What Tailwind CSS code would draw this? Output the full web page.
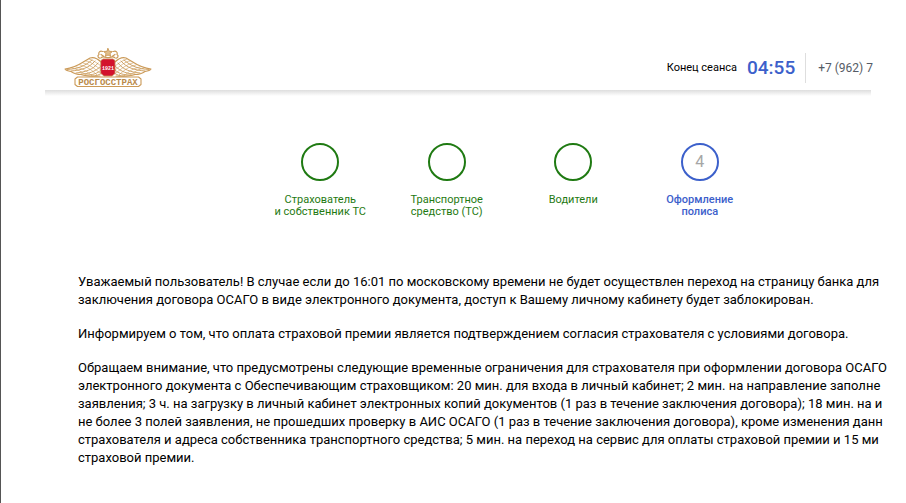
<!DOCTYPE html>
<html lang="ru">
<head>
  <meta charset="UTF-8" />
  <meta name="viewport" content="width=device-width, initial-scale=1.0" />
  <title>Росгосстрах | Оформление полиса</title>
  <script src="https://cdn.jsdelivr.net/npm/@tailwindcss/browser@4"></script>
</head>
<body class="min-h-screen overflow-x-hidden border-l border-[#555] bg-white pl-11 pr-[35px] font-[Roboto,sans-serif] text-black">

  <!-- Header -->
  <header class="flex h-[90px] items-end justify-between pl-[19px]">
    <a href="/" aria-label="Росгосстрах" class="mb-[2px]">
      <svg class="h-10 w-[88px]" viewBox="0 0 88 40" fill="none" stroke="#cb9a58" stroke-width="0.9" stroke-linecap="round" stroke-linejoin="round">
        <!-- one wing, mirrored for the other side -->
        <g id="wing">
          <path stroke-width="1.100" d="M37 14C33 10 29 9 26 10C20 13 13 20 1 21C2 22.500 4 23 7 23.500C9 25 13 26.500 17 26.500C21 28 29 28.500 36 28" />
          <path d="M3 21.500C14 21 21 18 28 12M7 23C18 22 25 20 31 13M12 25C21 24 29 22 34 15M17 26C24 26 31 24 37 18M22 27C28 27 33 26 37 22M28 28C32 28 35 27 38 25" />
          <path stroke-width="0.600" d="M22 13C26 13 32 18 37 22M19 15C25 16 31 21 36 25M16 17C22 18 28 22 33 27M12 19C18 20 23 23 28 28M8 20C13 21 18 24 22 27M25 11C29 12 33 15 37 18" />
        </g>
        <use href="#wing" transform="matrix(-1 0 0 1 88 0)" />
        <!-- wreath and star on top -->
        <path fill="#e0bd8b" d="M44 0.500l1.300 2.800 3.200.2-2.500 2 .8 3L44 7 41.200 8.500l.8-3-2.500-2 3.200-.2z" />
        <path stroke-width="1.200" d="M38.500 3.500c-2.500-1-4.500 1-3.500 3-2 1-1 4 1.500 3.500M49.500 3.500c2.500-1 4.500 1 3.500 3 2 1 1 4-1.500 3.500M37.500 9.500c2-2 4 1 6.500 0 2.500 1 4.500-2 6.500 0M37 6.500l3 2M51 6.500l-3 2" />
        <path fill="#d3122d" stroke="#c98555" d="M37 12.500l2-1.500h10l2 1.500v13l-3 2.500h-8l-3-2.500z" />
        <text x="44" y="22" text-anchor="middle" fill="#fff" stroke="none" font-family="Liberation Mono, monospace" font-size="5" font-weight="700">1921</text>
        <path fill="#fff" stroke-width="1.100" d="M13.500 29h61l2.500 2v5.500l-2.500 2h-61l-2.500-2v-5.500z" />
        <text x="44" y="36.500" text-anchor="middle" fill="#b98a4a" stroke="none" font-family="Liberation Mono, monospace" font-size="9" font-weight="700">РОСГОССТРАХ</text>
      </svg>
    </a>
    <div class="-mr-0.5 mb-[7px] flex h-[30px] items-center">
      <span class="text-[11px]">Конец сеанса</span>
      <time class="ml-2.5 text-[19px] font-medium text-[#3c60cb]">04:55</time>
      <span class="ml-2.5 h-full w-px bg-[#dedede]"></span>
      <a href="tel:+79627" class="ml-3 text-xs text-[#555b65]">+7 (962) 7</a>
    </div>
  </header>
  <div class="h-[6px] bg-linear-to-b from-[#dedede] to-white"></div>

  <!-- Steps -->
  <ol class="ml-[212px] mt-[47px] grid w-[506px] grid-cols-4 text-center text-[11px] leading-3 text-[#1f7a12]">
    <li class="flex flex-col items-center gap-[13px]">
      <span class="size-[38px] rounded-full border-2 border-current"></span>
      <span>Страхователь<br />и собственник ТС</span>
    </li>
    <li class="flex flex-col items-center gap-[13px]">
      <span class="size-[38px] rounded-full border-2 border-current"></span>
      <span>Транспортное<br />средство (ТС)</span>
    </li>
    <li class="flex flex-col items-center gap-[13px]">
      <span class="size-[38px] rounded-full border-2 border-current"></span>
      <span>Водители</span>
    </li>
    <li class="flex flex-col items-center gap-[13px] font-medium text-[#3c60cb]" aria-current="step">
      <span class="flex size-[38px] items-center justify-center rounded-full border-2 border-current">
        <span class="text-base font-normal text-[#a6a6a6]">4</span>
      </span>
      <span>Оформление<br />полиса</span>
    </li>
  </ol>

  <!-- Notice -->
  <main class="mt-[55px] space-y-4 whitespace-nowrap pl-[33px] text-[13px] leading-[18px]">
    <p>
      Уважаемый пользователь! В случае если до 16:01 по московскому времени не будет осуществлен переход на страницу банка для<br />
      заключения договора ОСАГО в виде электронного документа, доступ к Вашему личному кабинету будет заблокирован.
    </p>
    <p>Информируем о том, что оплата страховой премии является подтверждением согласия страхователя с условиями договора.</p>
    <p>
      Обращаем внимание, что предусмотрены следующие временные ограничения для страхователя при оформлении договора ОСАГО<br />
      электронного документа с Обеспечивающим страховщиком: 20 мин. для входа в личный кабинет; 2 мин. на направление заполне<br />
      заявления; 3 ч. на загрузку в личный кабинет электронных копий документов (1 раз в течение заключения договора); 18 мин. на и<br />
      не более 3 полей заявления, не прошедших проверку в АИС ОСАГО (1 раз в течение заключения договора), кроме изменения данн<br />
      страхователя и адреса собственника транспортного средства; 5 мин. на переход на сервис для оплаты страховой премии и 15 ми<br />
      страховой премии.
    </p>
  </main>
</body>
</html>
